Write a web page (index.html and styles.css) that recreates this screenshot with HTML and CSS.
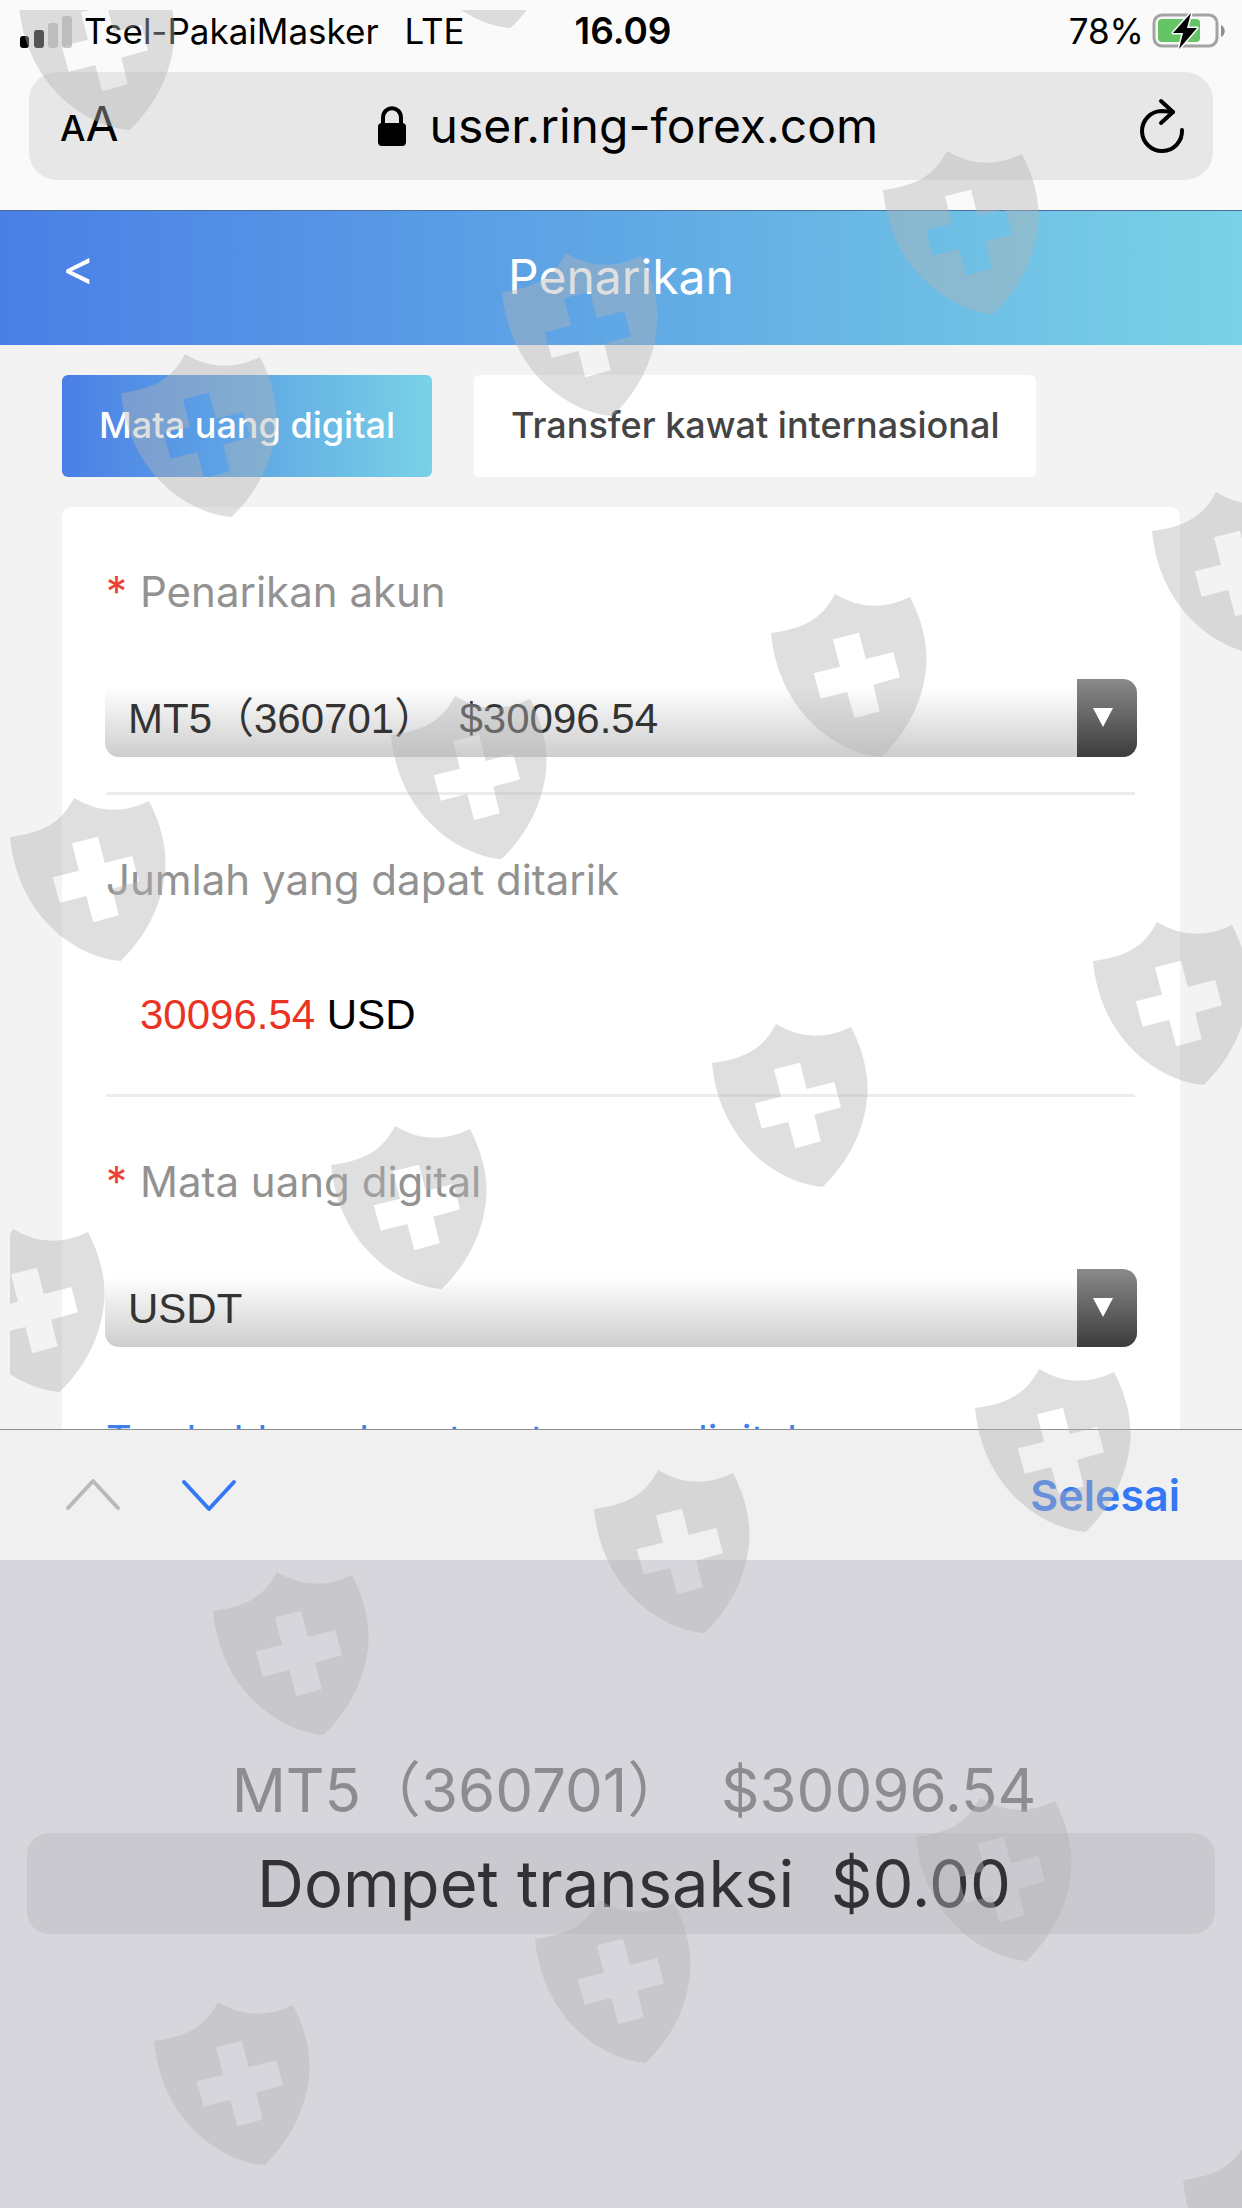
FILE: index.html
```html
<!DOCTYPE html>
<html lang="id">
	<head>
		<meta charset="utf-8">
		<meta name="viewport" content="width=device-width, initial-scale=1">
		<title>Penarikan</title>
		<link rel="stylesheet" href="styles.css">
	</head>
	<body>
		<div class="status">
			<div class="carrier">
				<svg class="signal" width="54" height="40" viewBox="0 0 54 40">
					<rect x="0" y="25" width="9" height="12" rx="3" fill="#000"/>
					<rect x="14" y="19" width="10" height="18" rx="3" fill="#111"/>
					<rect x="28" y="12" width="10" height="25" rx="3" fill="#c4c4c4"/>
					<rect x="42" y="5" width="10" height="32" rx="3" fill="#c4c4c4"/>
				</svg>
				<span>Tsel-PakaiMasker</span>
				<span class="network">LTE</span>
			</div>
			<div class="time">16.09</div>
			<div class="power">
				<span>78%</span>
				<svg width="74" height="38" viewBox="0 0 74 38">
					<rect x="2" y="3" width="63" height="31" rx="8" fill="none" stroke="#a3a3a3" stroke-width="3"/>
					<rect x="6" y="7" width="42" height="23" rx="4" fill="#65c466"/>
					<path d="M69 13 C74 15 74 23 69 25 Z" fill="#8e8e8e"/>
					<path d="M39 1 L21 21 L31 21 L27 37 L45 16 L35 16 Z" fill="#000" stroke="#fafafa" stroke-width="3" paint-order="stroke" stroke-linejoin="round"/>
				</svg>
			</div>
		</div>
		<div class="browser">
			<div class="urlbar">
				<button class="textsize" type="button" aria-label="Ukuran teks"><span class="small">A</span><span class="big">A</span></button>
				<div class="address">
					<svg width="28" height="40" viewBox="0 0 28 40">
						<rect x="0" y="17" width="28" height="23" rx="4" fill="#000"/>
						<path d="M5 19 V12 C5 -1 23 -1 23 12 V19" fill="none" stroke="#000" stroke-width="4"/>
					</svg>
					<span>user.ring-forex.com</span>
				</div>
				<button class="reload" type="button" aria-label="Muat ulang">
					<svg width="48" height="56" viewBox="0 0 48 56" fill="none" stroke="#000" stroke-width="4" stroke-linecap="round" stroke-linejoin="round">
						<path d="M45 32 A20 20 0 1 1 25 13 L36 14"/>
						<path d="M24 3 L36 14 L24 25"/>
					</svg>
				</button>
			</div>
		</div>

		<div class="page">
			<div class="header">
				<a class="back" href="#" aria-label="Kembali">&lt;</a>
				<h1>Penarikan</h1>
			</div>
			<div class="tabs">
				<button class="tab active" type="button">Mata uang digital</button>
				<button class="tab" type="button">Transfer kawat internasional</button>
			</div>
			<form class="card">
				<div class="field">
					<label for="account"><span class="req">*</span>Penarikan akun</label>
					<div class="select">
						<select id="account">
							<option>MT5（360701）&nbsp; $30096.54</option>
							<option>Dompet transaksi&nbsp; $0.00</option>
						</select>
					</div>
				</div>
				<div class="field">
					<div class="label">Jumlah yang dapat ditarik</div>
					<div class="amount"><span class="red">30096.54</span> USD</div>
				</div>
				<div class="field">
					<label for="coin"><span class="req">*</span>Mata uang digital</label>
					<div class="select">
						<select id="coin">
							<option>USDT</option>
						</select>
					</div>
				</div>
				<a class="add" href="#">Tambahkan alamat mata uang digital</a>
			</form>
		</div>

		<div class="toolbar">
			<button type="button" aria-label="Sebelumnya" disabled>
				<svg width="56" height="34" viewBox="0 0 56 34" fill="none" stroke="#b9b9b9" stroke-width="4" stroke-linecap="round" stroke-linejoin="round"><path d="M3 30 L28 3 L53 30"/></svg>
			</button>
			<button type="button" aria-label="Berikutnya">
				<svg width="56" height="34" viewBox="0 0 56 34" fill="none" stroke="#3478f6" stroke-width="4" stroke-linecap="round" stroke-linejoin="round"><path d="M3 4 L28 31 L53 4"/></svg>
			</button>
			<button class="done" type="button">Selesai</button>
		</div>
		<div class="picker" role="listbox" aria-label="Penarikan akun">
			<div class="option" role="option" aria-selected="false">MT5（360701）&nbsp; $30096.54</div>
			<div class="option selected" role="option" aria-selected="true">Dompet transaksi&nbsp; $0.00</div>
		</div>

		<!-- shield pattern over the whole page -->
		<svg class="shields" aria-hidden="true">
			<defs>
				<clipPath id="edge"><rect x="10" y="10" width="100%" height="100%"/></clipPath>
				<path id="shield" fill-rule="evenodd" d="M0 39 C30 35 50 27 64 0 Q100 22 139 3 C152 28 156 50 155.500 68 C154 100 140 135 110.500 163 C70 160 8 122 0 39 Z M62 45.300 L88 38.700 L94.700 65 L122.300 58 L129 83.300 L102.300 90.700 L108.700 117.300 L83.300 124.300 L76.300 98 L49.700 104.700 L42.700 79.300 L69 72.700 Z"/>
			</defs>
			<g clip-path="url(#edge)">
				<use href="#shield" x="400" y="-135"/>
				<use href="#shield" x="19" y="-33"/>
				<use href="#shield" x="883" y="151"/>
				<use href="#shield" x="502" y="253"/>
				<use href="#shield" x="121" y="354"/>
				<use href="#shield" x="1152" y="492"/>
				<use href="#shield" x="771" y="594"/>
				<use href="#shield" x="391" y="696"/>
				<use href="#shield" x="10" y="798"/>
				<use href="#shield" x="1093" y="922"/>
				<use href="#shield" x="712" y="1024"/>
				<use href="#shield" x="331" y="1126"/>
				<use href="#shield" x="-51" y="1229"/>
				<use href="#shield" x="975" y="1369"/>
				<use href="#shield" x="594" y="1470"/>
				<use href="#shield" x="213" y="1572"/>
				<use href="#shield" x="916" y="1798"/>
				<use href="#shield" x="535" y="1900"/>
				<use href="#shield" x="154" y="2002"/>
				<use href="#shield" x="1183" y="2141"/>
			</g>
		</svg>
	</body>
</html>
```
FILE: styles.css
```css
* {box-sizing:border-box;}
html, body {margin:0;padding:0;}
body {position:relative;display:flex;flex-direction:column;height:100vh;overflow:hidden;background-color:#fafafa;color:#000;font-family:Inter,"Noto Sans CJK SC",sans-serif;}
button, select {font-family:inherit;border:0;margin:0;padding:0;background:none;color:inherit;}
button {cursor:pointer;}
a {text-decoration:none;}
svg {display:block;flex:none;}

/* status bar */
.status {display:grid;grid-template-columns:1fr auto 1fr;align-items:center;height:62px;padding:0 16px 0 20px;font-size:35px;line-height:40px;}
.carrier, .power {display:flex;align-items:center;}
.carrier {gap:10px;}
.network {margin-left:16px;}
.power {justify-content:flex-end;gap:8px;}
.time {font-size:37px;font-weight:600;}

/* address bar */
.browser {padding:10px 29px 30px;}
.urlbar {display:flex;align-items:center;justify-content:space-between;height:108px;padding:0 28px 0 31px;border-radius:28px;background-color:#e7e7e7;}
.textsize {display:flex;align-items:baseline;line-height:60px;}
.textsize .small {font-size:36px;font-weight:500;}
.textsize .big {font-size:48px;}
.address {display:flex;align-items:center;gap:24px;font-size:48px;line-height:60px;}

.page {flex:1;min-height:0;overflow:hidden;background-color:#f3f3f3;}
.header {display:grid;grid-template-columns:1fr auto 1fr;align-items:center;height:135px;padding:0 62px 2px;border-top:1px solid #4a6f9f;background:linear-gradient(to right,#4a7fe6,#60a8e5 50%,#79d2e6);color:#fff;}
.header h1 {margin:0;font-size:48px;line-height:56px;font-weight:400;}
.back {color:#fff;font-size:50px;line-height:56px;padding-bottom:20px;}

.tabs {display:flex;gap:42px;padding:30px 62px;}
.tab {height:102px;padding:0 37px 2px;border-radius:6px;background-color:#fff;color:#444;font-size:36px;font-weight:500;}
.tab.active {background:linear-gradient(to right,#4a7fe6,#60a8e5 50%,#79d2e6);color:#fff;}

.card {margin:0 62px;padding:0 45px 0 44px;border-radius:10px;background-color:#fff;}
.field {padding:53px 0 35px;border-bottom:3px solid #ececec;}
.field:nth-of-type(3) {border-bottom:0;}
.field label, .label {display:flex;align-items:center;color:#929292;font-size:42px;line-height:64px;}
.req {width:34px;color:#ea4335;font-size:42px;}
.amount {padding:70px 34px 11px;font-family:"Liberation Sans",sans-serif;font-size:42px;line-height:66px;}
.red {color:#eb3323;}
.select {position:relative;margin:55px -2px 0 -1px;}
.select select {display:block;width:100%;height:78px;padding:0 84px 0 23px;border-radius:14px;background:linear-gradient(#fff 10%,#cdcdcd);color:#333;font-family:"Liberation Sans","Noto Sans CJK SC",sans-serif;font-size:42px;appearance:none;}
.select:before {content:"";position:absolute;top:0;right:0;width:60px;height:78px;border-radius:0 14px 14px 0;background:linear-gradient(#8a8a8a,#3c3c3c);pointer-events:none;}
.select:after {content:"";position:absolute;top:29px;right:24px;border:10px solid transparent;border-top:19px solid #fff;border-bottom:0;pointer-events:none;}
.add {display:block;padding-top:28px;color:#3f7fea;font-size:40px;line-height:60px;white-space:nowrap;}

/* picker */
.toolbar {display:flex;align-items:center;gap:60px;height:131px;padding:0 62px 0 65px;border-top:1px solid #8f8f92;background-color:#f0f0f0;}
.done {margin-left:auto;color:#3478f6;font-size:43px;font-weight:600;}
.picker {padding:188px 27px 274px;background-color:#d7d6dc;}
.option {height:85px;padding-left:26px;color:#8d8c91;font-size:60px;line-height:85px;text-align:center;white-space:nowrap;}
.selected {height:101px;border-radius:22px;background-color:#cac9cf;color:#323236;font-size:65px;line-height:101px;}

.shields {position:absolute;top:0;left:0;width:100%;height:100%;fill:rgba(178,178,178,.42);pointer-events:none;}
```
